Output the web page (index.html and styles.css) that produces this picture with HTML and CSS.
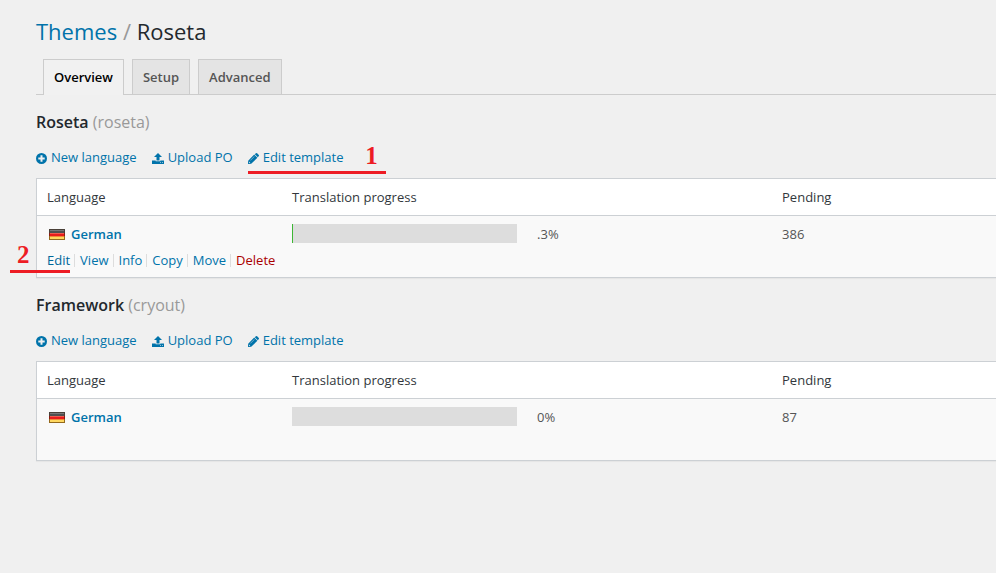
FILE: index.html
```
<!DOCTYPE html>
<html lang="en">
<head>
<meta charset="utf-8">
<title>Themes / Roseta</title>
<link rel="stylesheet" href="styles.css">
</head>
<body>
<svg class="defs" aria-hidden="true">
  <symbol id="icon-add" viewBox="0 0 11 11">
    <path fill-rule="evenodd" d="M5.500 0a5.500 5.500 0 1 1 0 11a5.500 5.500 0 1 1 0-11zM4.500 2.300v2.200H2.300v2H4.500v2.200h2V6.500h2.200v-2H6.500V2.300z"/>
  </symbol>
  <symbol id="icon-upload" viewBox="0 0 12 11">
    <path d="M6 0l4 4H7.500v3.500H4.500V4H2z"/>
    <path fill-rule="evenodd" d="M0 7.500h3.700v.8h4.600v-.8H12V11H0zM8.200 9.300v.8h.8v-.8zM10 9.300v.8h.8v-.8z"/>
  </symbol>
  <symbol id="icon-pencil" viewBox="0 0 11 11">
    <path fill-rule="evenodd" d="M6.200 1.600l3.200 3.200-6.200 6L0 11l.2-3.300zM1.200 8.600l-.2 1.300 1.300-.2zM6.300 3.300L2.300 7.300l.2.200 4-4z"/>
    <path d="M6.800 1.200L7.900.2q.6-.4 1.200 0l1.700 1.700q.4.500 0 1.200l-1 1.100z"/>
  </symbol>
  <symbol id="flag-de" viewBox="0 0 16 11">
    <path fill="#4a4038" d="M0 0h16v4H0z"/>
    <path fill="#8a1c14" d="M0 4h16v3H0z"/>
    <path fill="#94691c" d="M0 7h16v4H0z"/>
    <path fill="#777" d="M1 1h14v1H1z"/>
    <path fill="#505050" d="M1 2h14v2H1z"/>
    <path fill="#f4584c" d="M1 4h14v1H1z"/>
    <path fill="#e81c1c" d="M1 5h14v2H1z"/>
    <path fill="#f08a38" d="M1 7h14v1H1z"/>
    <path fill="#ffd860" d="M1 8h14v2H1z"/>
  </symbol>
</svg>

<main class="wrap">
  <h1 class="title"><a href="#themes">Themes</a> <span class="slash">/</span> Roseta</h1>

  <nav class="tabs">
    <a class="tab tab-active" href="#overview">Overview</a>
    <a class="tab" href="#setup">Setup</a>
    <a class="tab" href="#advanced">Advanced</a>
  </nav>

  <section class="project">
    <h2 class="name">Roseta <span class="domain">(roseta)</span></h2>
    <div class="links">
      <a href="#new"><svg class="icon"><use href="#icon-add"/></svg>New language</a>
      <a href="#upload"><svg class="icon icon-wide"><use href="#icon-upload"/></svg>Upload PO</a>
      <a class="marked" href="#template"><svg class="icon"><use href="#icon-pencil"/></svg>Edit template<span class="mark mark-one">1</span></a>
    </div>
    <table class="langs">
      <colgroup><col class="col-lang"><col class="col-bar"><col class="col-pct"><col></colgroup>
      <thead><tr><th>Language</th><th colspan="2">Translation progress</th><th>Pending</th></tr></thead>
      <tbody>
        <tr>
          <td>
            <a class="lang" href="#german"><svg class="flag"><use href="#flag-de"/></svg>German</a>
            <div class="actions">
              <a class="marked edit" href="#edit">Edit<span class="mark mark-two">2</span></a>
              <a href="#view">View</a>
              <a href="#info">Info</a>
              <a href="#copy">Copy</a>
              <a href="#move">Move</a>
              <a class="delete" href="#delete">Delete</a>
            </div>
          </td>
          <td><div class="bar"><div class="fill"></div></div></td>
          <td>.3%</td>
          <td>386</td>
        </tr>
      </tbody>
    </table>
  </section>

  <section class="project">
    <h2 class="name">Framework <span class="domain">(cryout)</span></h2>
    <div class="links">
      <a href="#new-2"><svg class="icon"><use href="#icon-add"/></svg>New language</a>
      <a href="#upload-2"><svg class="icon icon-wide"><use href="#icon-upload"/></svg>Upload PO</a>
      <a href="#template-2"><svg class="icon"><use href="#icon-pencil"/></svg>Edit template</a>
    </div>
    <table class="langs">
      <colgroup><col class="col-lang"><col class="col-bar"><col class="col-pct"><col></colgroup>
      <thead><tr><th>Language</th><th colspan="2">Translation progress</th><th>Pending</th></tr></thead>
      <tbody>
        <tr>
          <td>
            <a class="lang" href="#german-2"><svg class="flag"><use href="#flag-de"/></svg>German</a>
            <div class="actions"></div>
          </td>
          <td><div class="bar"></div></td>
          <td>0%</td>
          <td>87</td>
        </tr>
      </tbody>
    </table>
  </section>
</main>
</body>
</html>
```
FILE: styles.css
```
* { box-sizing: border-box; }

body {
  margin: 0;
  background: #f0f0f0;
  color: #32373c;
  font: 13px/20px "Open Sans", "Noto Sans", sans-serif;
}

a { color: #0073aa; text-decoration: none; }

.defs { position: absolute; width: 0; height: 0; }

.wrap { padding: 16px 0 0 36px; }

.title {
  margin: 0;
  color: #23282d;
  font-size: 22px;
  font-weight: 400;
  line-height: 30px;
}
.slash { color: #999; }

.tabs {
  display: flex;
  gap: 8px;
  margin-top: 13px;
  padding-left: 7px;
  border-bottom: 1px solid #ccc;
}
.tab {
  padding: 7px 10px;
  border: 1px solid #ccc;
  border-bottom: 0;
  background: #e4e4e4;
  color: #555;
  font-weight: 600;
}
.tab-active {
  margin-bottom: -1px;
  padding-bottom: 8px;
  background: #f1f1f1;
  color: #000;
}

.project { margin-bottom: 15px; }
.tabs + .project { margin-top: 15px; }

.name {
  margin: 0;
  color: #23282d;
  font-size: 16px;
  font-weight: 600;
  line-height: 24px;
}
.domain { color: #999; font-weight: 400; }

.links {
  display: flex;
  gap: 15px;
  margin: 13px 0 11px;
}
.links a { display: flex; align-items: center; gap: 4px; }

.icon { width: 11px; height: 11px; margin-top: 2px; fill: #0073aa; }
.icon-wide { width: 12px; }

.langs {
  width: 100%;
  table-layout: fixed;
  border: 1px solid #ccd0d4;
  border-right: 0;
  border-spacing: 0;
  background: #f9f9f9;
  box-shadow: 0 1px 1px rgba(0, 0, 0, .04);
}
.col-lang, .col-bar, .col-pct { width: 25.55%; }

th {
  padding: 8px 10px;
  border-bottom: 1px solid #ccd0d4;
  background: #fff;
  font-weight: 400;
  text-align: left;
}
td {
  padding: 8px 10px 7px;
  color: #555;
  vertical-align: top;
}

.lang { display: flex; align-items: center; gap: 6px; padding-left: 2px; font-weight: 600; }
.flag { width: 16px; height: 11px; }

.actions { display: flex; height: 20px; margin-top: 6px; }
.actions a { display: flex; align-items: center; white-space: nowrap; }
.actions a + a::before {
  content: "";
  height: 13px;
  margin: 0 5px 0 4px;
  border-left: 1px solid #ddd;
}
.actions .delete { color: #a00; }
.actions .edit { color: #006799; }

.bar { height: 19px; background: #ddd; }
.fill { width: 1px; height: 100%; background: #3db634; }

/* Tutorial callouts drawn over the links */
.marked { position: relative; }
.mark {
  position: absolute;
  border-bottom: 3px solid #ed1c24;
  color: #ed1c24;
  font: bold 25px/26px "Liberation Serif", serif;
}
.mark-one {
  top: -4px;
  left: 0;
  width: 138px;
  height: 31px;
  padding-right: 8px;
  text-align: right;
}
.mark-two {
  top: -8px;
  right: 0;
  width: 60px;
  height: 31px;
  padding-left: 7px;
}
```
